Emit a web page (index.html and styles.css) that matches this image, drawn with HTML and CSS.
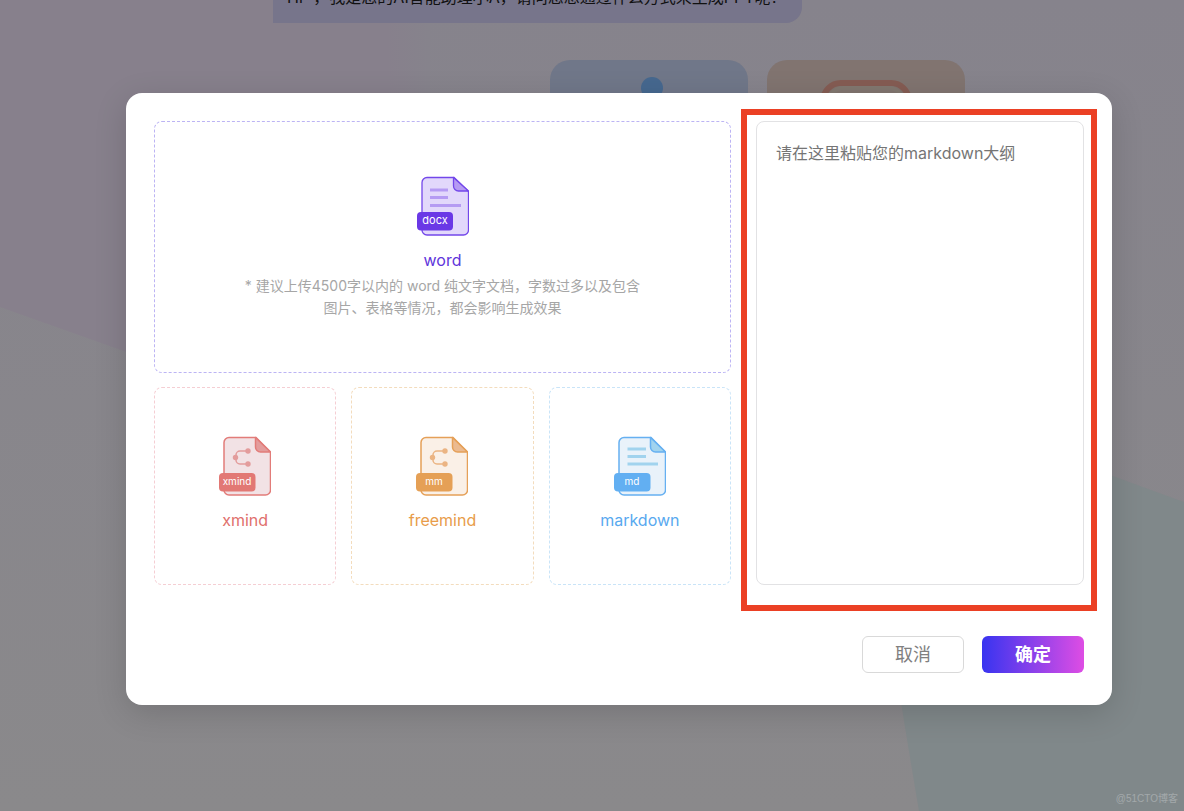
FILE: index.html
```html
<!DOCTYPE html>
<html lang="zh-CN">
<head>
<meta charset="utf-8">
<meta name="viewport" content="width=device-width, initial-scale=1">
<title>导入大纲</title>
<link rel="stylesheet" href="styles.css">
</head>
<body>
<div class="page">
  <svg class="backdrop" viewBox="0 0 1184 811" preserveAspectRatio="none" aria-hidden="true">
    <defs>
      <linearGradient id="base" x1="0" y1="0" x2="0" y2="1"><stop offset="0" stop-color="#86838c"/><stop offset="1" stop-color="#8a898b"/></linearGradient>
      <linearGradient id="violet" x1="0" y1="0" x2="1" y2="0"><stop offset="0" stop-color="#87808c"/><stop offset=".9" stop-color="#87808c"/><stop offset="1" stop-color="#86838c"/></linearGradient>
    </defs>
    <rect width="1184" height="811" fill="url(#base)"/>
    <path d="M0 0H430V460L0 307Z" fill="url(#violet)"/>
    <path d="M850 380L1184 502V811H919Q900 700 850 380Z" fill="#80888a"/>
  </svg>
  <main class="chat">
    <p class="bubble">Hi~，我是您的AI智能助理小A，请问您想通过什么方式来生成PPT呢?</p>
    <div class="options">
      <div class="option option-blue"><svg width="22" height="22" viewBox="0 0 22 22"><circle cx="11" cy="11" r="11" fill="#46688f"/></svg></div>
      <div class="option option-orange"><svg width="92" height="60" viewBox="0 0 92 60"><rect x="3" y="3" width="86" height="70" rx="18" fill="#81746f" stroke="#855c53" stroke-width="6"/><rect x="9" y="8" width="74" height="60" rx="14" fill="none" stroke="#827870" stroke-width="4"/></svg></div>
    </div>
  </main>
  <div class="overlay">
    <section class="dialog" role="dialog" aria-label="导入大纲">
      <div class="content">
        <div class="uploads">
          <button type="button" class="drop word">
            <svg class="icon" width="52" height="62" viewBox="0 0 52 62">
              <path d="M10 1.500H37L51.500 15.500V54a5 5 0 0 1-5 5H10a5 5 0 0 1-5-5V6.500a5 5 0 0 1 5-5Z" fill="#e2d8fb" stroke="#7347ea" stroke-width="1.300"/>
              <path d="M36.500 1.500V10a5 5 0 0 0 5 5H51.500Z" fill="#b59bf3" stroke="#7347ea" stroke-width="1.300" stroke-linejoin="round"/>
              <path d="M13 14h18M13 21.500h18M13 29.500h31" stroke="#b59bf3" stroke-width="3.200"/>
              <rect y="36" width="36" height="18.500" rx="4" fill="#6a38e6"/>
              <text x="18" y="48" class="tag">docx</text>
            </svg>
            <span class="name">word</span>
            <span class="hint">* 建议上传4500字以内的 word 纯文字文档，字数过多以及包含图片、表格等情况，都会影响生成效果</span>
          </button>
          <div class="row">
            <button type="button" class="drop xmind">
              <svg class="icon" width="52" height="62" viewBox="0 0 52 62">
                <path d="M10 1.500H37L51.500 16V54a5 5 0 0 1-5 5H10a5 5 0 0 1-5-5V6.500a5 5 0 0 1 5-5Z" fill="#f2e2e5" stroke="#e27c79" stroke-width="1.500"/>
                <path d="M36.500 1.500V11a5 5 0 0 0 5 5H51.500Z" fill="#e39c9c" stroke="#e27c79" stroke-width="1.500" stroke-linejoin="round"/>
                <path d="M29 15H21a4 4 0 0 0-4 4v5a4 4 0 0 0 4 4h8" fill="none" stroke="#e39c9c" stroke-width="1.500"/>
                <g fill="#e39c9c"><circle cx="29" cy="15" r="2.700"/><circle cx="16.500" cy="21.500" r="2.700"/><circle cx="29" cy="28" r="2.700"/></g>
                <rect y="37" width="36.500" height="18.500" rx="4" fill="#e27874"/>
                <text x="18" y="49" class="tag tag-small">xmind</text>
              </svg>
              <span class="name">xmind</span>
            </button>
            <button type="button" class="drop freemind">
              <svg class="icon" width="52" height="62" viewBox="0 0 52 62">
                <path d="M10 1.500H37L51.500 16V54a5 5 0 0 1-5 5H10a5 5 0 0 1-5-5V6.500a5 5 0 0 1 5-5Z" fill="#faf0e7" stroke="#e5a058" stroke-width="1.500"/>
                <path d="M36.500 1.500V11a5 5 0 0 0 5 5H51.500Z" fill="#ebba90" stroke="#e5a058" stroke-width="1.500" stroke-linejoin="round"/>
                <path d="M29 15H21a4 4 0 0 0-4 4v5a4 4 0 0 0 4 4h8" fill="none" stroke="#ebb483" stroke-width="1.500"/>
                <g fill="#ebb483"><circle cx="29" cy="15" r="2.700"/><circle cx="16.500" cy="21.500" r="2.700"/><circle cx="29" cy="28" r="2.700"/></g>
                <rect y="37" width="36.500" height="18.500" rx="4" fill="#e5a056"/>
                <text x="18" y="49" class="tag tag-small">mm</text>
              </svg>
              <span class="name">freemind</span>
            </button>
            <button type="button" class="drop markdown">
              <svg class="icon" width="52" height="62" viewBox="0 0 52 62">
                <path d="M10 1.500H37L51.500 16V54a5 5 0 0 1-5 5H10a5 5 0 0 1-5-5V6.500a5 5 0 0 1 5-5Z" fill="#e9f2fa" stroke="#66b0f1" stroke-width="1.500"/>
                <path d="M36.500 1.500V11a5 5 0 0 0 5 5H51.500Z" fill="#a1d3ee" stroke="#66b0f1" stroke-width="1.500" stroke-linejoin="round"/>
                <path d="M13.500 13h18.500M13.500 20.500h18.500M13.500 28h30.500" stroke="#a1d3ee" stroke-width="3"/>
                <rect y="37" width="36.500" height="18.500" rx="4" fill="#62aff2"/>
                <text x="18" y="49" class="tag tag-small">md</text>
              </svg>
              <span class="name">markdown</span>
            </button>
          </div>
        </div>
        <div class="outline">
          <textarea class="outline-input" aria-label="markdown大纲" placeholder="请在这里粘贴您的markdown大纲"></textarea>
          <div class="highlight"></div>
        </div>
      </div>
      <div class="actions">
        <button type="button" class="btn cancel">取消</button>
        <button type="button" class="btn confirm">确定</button>
      </div>
    </section>
  </div>
  <span class="watermark">@51CTO博客</span>
</div>
</body>
</html>
```
FILE: styles.css
```css
* { box-sizing: border-box; }

body {
  margin: 0;
  font-family: Inter, "Noto Sans CJK SC", sans-serif;
}

button, textarea { font-family: inherit; }

.page {
  position: relative;
  min-height: 100vh;
  overflow: hidden;
  background: #85838a;
}

.backdrop {
  position: absolute;
  inset: 0;
  width: 100%;
  height: 100%;
}

.chat {
  position: absolute;
  top: -28px;
  left: 273px;
}

.bubble {
  width: fit-content;
  margin: 0;
  padding: 14px 23px 14px 14px;
  border-radius: 0 16px 16px 0;
  background: #77758b;
  color: #111;
  font-size: 16px;
  line-height: 23px;
  white-space: nowrap;
}

.options {
  display: flex;
  gap: 19px;
  margin: 37px 0 0 277px;
}

.option {
  display: flex;
  justify-content: center;
  width: 198px;
  height: 200px;
  border-radius: 20px;
}

.option-blue { padding: 17px 0 0 6px; background: #707789; }
.option-orange { padding-top: 20px; background: #817470; }

.overlay {
  position: relative;
  display: flex;
  align-items: flex-start;
  padding: 93px 72px 106px 126px;
}

.dialog {
  flex: 1;
  padding: 28px 28px 32px;
  border-radius: 16px;
  background: #fff;
  box-shadow: 0 8px 32px rgba(0, 0, 0, .15);
}

.content {
  display: grid;
  grid-template-columns: 577fr 328fr;
  gap: 25px;
}

.uploads {
  display: flex;
  flex-direction: column;
  gap: 14px;
}

.row {
  display: grid;
  grid-template-columns: repeat(3, 1fr);
  gap: 15px;
}

.drop {
  display: flex;
  flex-direction: column;
  align-items: center;
  padding: 48px 16px;
  border: 1px dashed;
  border-radius: 8px;
  background: #fff;
}

.row .drop { height: 198px; }

.drop.word { padding: 54px 84px 53px; border-color: #bcb4f4; color: #6035db; }
.drop.xmind { border-color: #f5ced3; color: #df706c; }
.drop.freemind { border-color: #f3dcbd; color: #e89c4a; }
.drop.markdown { border-color: #c9e4f8; color: #58a9ef; }

.icon { display: block; }

.tag {
  fill: #fff;
  font-size: 11px;
  text-anchor: middle;
}

.tag-small { font-size: 10px; }

.name {
  margin-top: 10px;
  font-size: 16px;
  line-height: 24px;
}

.hint {
  margin-top: 3px;
  color: #a6a6a6;
  font-size: 14px;
  line-height: 22px;
}

.outline {
  position: relative;
  display: flex;
}

.outline-input {
  flex: 1;
  min-width: 0;
  padding: 19px;
  border: 1px solid #e2e2e4;
  border-radius: 8px;
  background: #fff;
  font-size: 16px;
  line-height: 24px;
  resize: none;
}

.outline-input::placeholder { color: #757575; }

.highlight {
  position: absolute;
  inset: -12px -13px -26px -15px;
  border: 6px solid #eb4024;
  pointer-events: none;
}

.actions {
  display: flex;
  justify-content: flex-end;
  gap: 18px;
  margin-top: 51px;
}

.btn {
  width: 102px;
  height: 37px;
  padding: 0;
  border: 0;
  border-radius: 6px;
  font-size: 18px;
  line-height: 26px;
}

.cancel { border: 1px solid #d9d9d9; background: #fff; color: #808080; }
.confirm { background: linear-gradient(90deg, #3834f0, #de4de4); color: #fff; font-weight: 700; }

.watermark {
  position: absolute;
  right: 6px;
  bottom: 4px;
  color: #a3a8aa;
  font-family: "Liberation Sans", "Noto Sans CJK SC", sans-serif;
  font-size: 10px;
  line-height: 16px;
}
```
